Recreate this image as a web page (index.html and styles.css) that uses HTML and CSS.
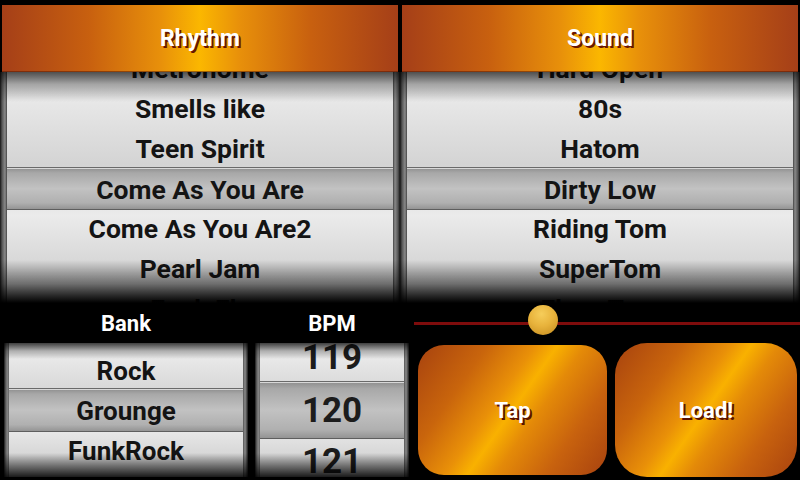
FILE: index.html
```html
<!DOCTYPE html>
<html>
<head>
<meta charset="utf-8">
<link rel="stylesheet" href="styles.css">
</head>
<body>
<div class="app">
  <div class="top">
    <section class="pane">
      <div class="hdr"><span>Rhythm</span></div>
      <div class="wheel big">
        <div class="drum">
          <div class="list">
            <div class="item">Metronome</div>
            <div class="item">Smells like</div>
            <div class="item">Teen Spirit</div>
            <div class="item sel">Come As You Are</div>
            <div class="item">Come As You Are2</div>
            <div class="item">Pearl Jam</div>
            <div class="item">Funk Fly</div>
          </div>
        </div>
        <div class="shade"></div>
      </div>
    </section>
    <section class="pane">
      <div class="hdr"><span>Sound</span></div>
      <div class="wheel big">
        <div class="drum">
          <div class="list">
            <div class="item">Hard Open</div>
            <div class="item">80s</div>
            <div class="item">Hatom</div>
            <div class="item sel">Dirty Low</div>
            <div class="item">Riding Tom</div>
            <div class="item">SuperTom</div>
            <div class="item">Floor Tom</div>
          </div>
        </div>
        <div class="shade"></div>
      </div>
    </section>
  </div>
  <div class="bottom">
    <div class="lbl">Bank</div>
    <div class="lbl">BPM</div>
    <div class="slider">
      <div class="track"></div>
      <div class="thumb"></div>
    </div>
    <div class="wheel small bank">
      <div class="drum">
        <div class="list">
          <div class="item">Rock</div>
          <div class="item sel">Grounge</div>
          <div class="item">FunkRock</div>
        </div>
      </div>
      <div class="shade"></div>
    </div>
    <div class="wheel small bpm">
      <div class="drum">
        <div class="list">
          <div class="item">119</div>
          <div class="item sel">120</div>
          <div class="item">121</div>
        </div>
      </div>
      <div class="shade"></div>
    </div>
    <div class="btns">
      <div class="btn tap"><span>Tap</span></div>
      <div class="btn load"><span>Load!</span></div>
    </div>
  </div>
</div>
</body>
</html>
```

FILE: styles.css
```css
html, body {
  margin: 0;
  padding: 0;
  background: #000;
}
body {
  width: 800px;
  height: 480px;
  overflow: hidden;
  font-family: Roboto, "Liberation Sans", sans-serif;
  font-weight: 700;
}
.app {
  width: 800px;
  height: 480px;
  display: flex;
  flex-direction: column;
}
.top {
  display: grid;
  grid-template-columns: 400px 400px;
  padding-top: 5px;
}
.pane {
  display: flex;
  flex-direction: column;
}
.hdr {
  height: 67px;
  margin: 0 2px;
  display: flex;
  align-items: center;
  justify-content: center;
  background: linear-gradient(to right, #a53f18 0%, #c8600f 22%, #e8900a 40%, #fbb700 50%, #e8900a 60%, #c8600f 78%, #a53f18 100%);
  box-shadow: inset 0 -1px 0 rgba(80,20,0,.5);
  color: #fff;
  font-size: 23px;
  text-shadow: 2px 2px 0 #6a1600;
}

/* wheels */
.wheel {
  position: relative;
  overflow: hidden;
  padding: 0 7px;
  background:
    linear-gradient(to right, #151515 0, #555 2px, #8a8a8a 5px, #444 7px, rgba(0,0,0,0) 7px, rgba(0,0,0,0) calc(100% - 7px), #444 calc(100% - 7px), #8a8a8a calc(100% - 5px), #555 calc(100% - 2px), #151515 100%),
    #000;
}
.wheel.big {
  height: 231px;
}
.drum {
  height: 100%;
  overflow: hidden;
  background: linear-gradient(to bottom, #cfcfcf 0%, #e8e8e8 12%, #d4d4d4 40%, #ebebeb 62%, #d6d6d6 84%, #b8b8b8 100%);
}
.list {
  display: flex;
  flex-direction: column;
}
.item {
  text-align: center;
  color: #141414;
  white-space: nowrap;
}
.big .list {
  margin-top: -23px;
}
.big .item {
  height: 40px;
  line-height: 40px;
  font-size: 26.5px;
}
.item.sel {
  background: linear-gradient(to bottom, #8e8e8e 0%, #a8a8a8 12%, #c2c2c2 50%, #b0b0b0 85%, #949494 100%);
  border-top: 1px solid #6a6a6a;
  border-bottom: 1px solid #5e5e5e;
  box-shadow: inset 0 1px 0 #d8d8d8;
}
.big .item.sel {
  margin: -2px 0 -1px;
  height: 41px;
  line-height: 43px;
}
.shade {
  position: absolute;
  inset: 0;
  pointer-events: none;
}
.big .shade {
  background: linear-gradient(to bottom, rgba(0,0,0,.62) 0, rgba(0,0,0,.25) 12px, rgba(0,0,0,0) 30px, rgba(0,0,0,0) 188px, rgba(0,0,0,.45) 212px, rgba(0,0,0,1) 231px);
}

/* bottom */
.bottom {
  display: grid;
  grid-template-columns: 244px 154px 1fr;
  grid-template-rows: 40px 134px;
  column-gap: 7px;
  padding-left: 4px;
}
.lbl {
  color: #fff;
  font-size: 22px;
  display: flex;
  align-items: center;
  justify-content: center;
}
.slider {
  position: relative;
  margin-left: -2px;
  display: flex;
  align-items: center;
}
.track {
  flex: 1;
  height: 3px;
  background: #7e0c0c;
}
.thumb {
  position: absolute;
  left: 114px;
  top: 2px;
  width: 30px;
  height: 30px;
  border-radius: 50%;
  background: radial-gradient(circle at 45% 30%, #f6cd5a 0%, #e8b33c 45%, #c48a1e 100%);
}
.wheel.small {
  padding: 0 5px;
  background:
    linear-gradient(to right, #1a1a1a 0, #6a6a6a 2px, #8a8a8a 4px, #555 5px, rgba(0,0,0,0) 5px, rgba(0,0,0,0) calc(100% - 5px), #555 calc(100% - 5px), #8a8a8a calc(100% - 3px), #6a6a6a calc(100% - 2px), #1a1a1a 100%),
    #000;
}
.small .shade {
  background: linear-gradient(to bottom, rgba(0,0,0,.7) 0, rgba(0,0,0,.2) 8px, rgba(0,0,0,0) 16px, rgba(0,0,0,0) calc(100% - 24px), rgba(0,0,0,.55) calc(100% - 8px), rgba(0,0,0,.85) 100%);
}
.bank .list {
  margin-top: 8px;
}
.bank .item {
  height: 40px;
  line-height: 40px;
  font-size: 26px;
}
.bank .item.sel {
  margin: -3px 0 -1px;
  height: 42px;
  line-height: 44px;
}
.bpm .list {
  margin-top: -11px;
}
.bpm .item {
  height: 52px;
  line-height: 52px;
  font-size: 35px;
  color: #1c1c1c;
}
.bpm .item.sel {
  margin: -3px 0 -3px;
  height: 56px;
  line-height: 58px;
}

.btns {
  display: grid;
  grid-template-columns: 189px 182px;
  column-gap: 8px;
  padding-left: 2px;
  align-items: center;
}
.btn {
  display: flex;
  align-items: center;
  justify-content: center;
  color: #fff;
  font-size: 22px;
  text-shadow: 2px 2px 0 #5a1200;
  background: linear-gradient(125deg, #a7420f 0%, #c9650c 25%, #e99008 42%, #f9b100 50%, #e48a08 60%, #c8620e 78%, #a8420f 100%);
}
.tap {
  height: 130px;
  border-radius: 26px;
}
.load {
  height: 134px;
  border-radius: 32px;
}
```
